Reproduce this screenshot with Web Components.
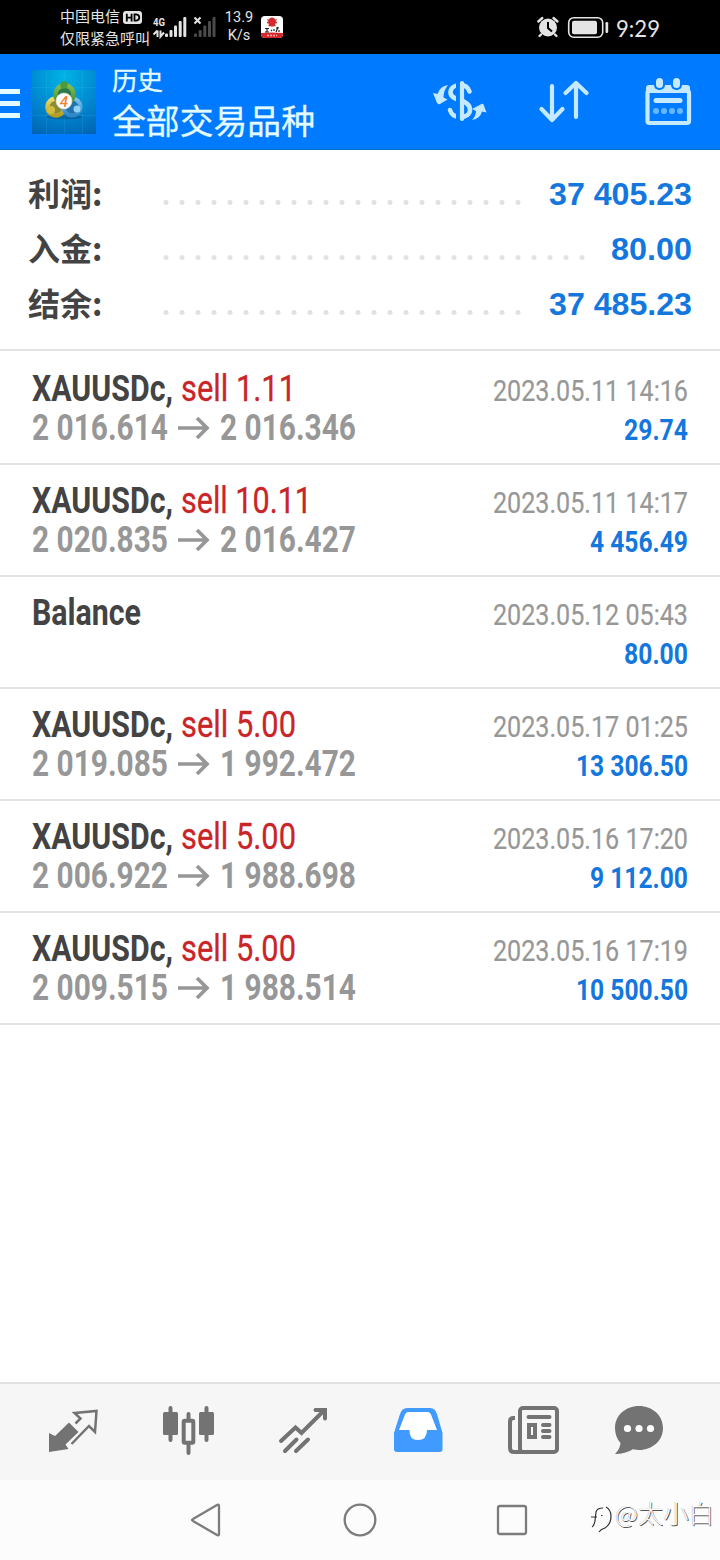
<!DOCTYPE html>
<html lang="zh-CN">
<head>
<meta charset="utf-8">
<title>历史</title>
<style>
html,body{margin:0;padding:0;background:#fff}
body{width:720px;height:1560px;overflow:hidden}
</style>
</head>
<body>
<history-app></history-app>
<script>
const CJK = '"Noto Sans CJK SC", sans-serif';

/* Single line of text whose glyphs are condensed to an exact advance width. */
class FitText extends HTMLElement {
  connectedCallback() {
    if (this.shadowRoot) return;
    const root = this.attachShadow({ mode: 'open' });
    root.innerHTML = `<style>
      :host{display:inline-block;white-space:nowrap;line-height:inherit;vertical-align:top;flex:none}
      span{display:inline-block;transform-origin:0 50%;line-height:inherit}
    </style><span><slot></slot></span>`;
    const w = parseFloat(this.getAttribute('w'));
    const span = root.querySelector('span');
    const natural = span.getBoundingClientRect().width;
    this.style.width = w + 'px';
    span.style.transform = `scaleX(${w / natural})`;
  }
}
customElements.define('fit-text', FitText);

class StatusBar extends HTMLElement {
  constructor() {
    super();
    this.attachShadow({ mode: 'open' }).innerHTML = `<style>
      :host{display:flex;height:54px;background:#000;color:#e4e4e4;font-family:Roboto,${CJK};box-sizing:border-box;padding-left:60px}
      .carrier{width:92px;padding-top:6px;font-size:15px;line-height:22px}
      .carrier div{display:flex;align-items:center;height:22px}
      .hd{margin-left:3px;margin-top:1px}
      .speed{width:32px;margin-left:71px;padding-top:9px;font-size:14.5px;line-height:18px;text-align:center}
      .app{margin:16px 0 0 6px}
      .right{margin-left:auto;display:flex;padding-right:60px}
      .time{font:24px/54px Lato,sans-serif;padding-top:1px;margin-left:7px}
    </style>
    <div class="carrier">
      <div><fit-text w="60">中国电信</fit-text><svg class="hd" width="20" height="14" viewBox="0 0 20 14"><rect width="19" height="13" rx="3" fill="#e4e4e4"/><path d="M3.8 2.8v7.6M8.6 2.8v7.6M3.8 6.6h4.8M11.5 3.4v6.2h1.8q3-.3 3-3.1t-3-3.1z" fill="none" stroke="#000" stroke-width="1.8"/></svg></div>
      <div><fit-text w="90">仅限紧急呼叫</fit-text></div>
    </div>
    <svg width="64" height="54" viewBox="152 0 64 54" style="margin-right:-64px">
      <text x="153" y="26" font-family="Roboto" font-weight="700" font-size="11.500" textLength="12" lengthAdjust="spacingAndGlyphs" fill="#e4e4e4">4G</text>
      <path d="M157.500 30.500v6.500M153.500 34.500l4-4M160.500 30.500v6l3.500-4" fill="none" stroke="#e4e4e4" stroke-width="2"/>
      <g fill="#e4e4e4"><rect x="165" y="33.500" width="3" height="3.500" rx="1"/><rect x="169.500" y="30" width="3" height="7" rx="1"/><rect x="174" y="25.500" width="3" height="11.500" rx="1"/><rect x="178.700" y="21" width="3" height="16" rx="1"/><rect x="183.300" y="17" width="3" height="20" rx="1"/></g>
      <g fill="#4b4b4b"><rect x="194" y="33.500" width="3" height="3.500" rx="1"/><rect x="198.700" y="30" width="3" height="7" rx="1"/><rect x="203.300" y="25.500" width="3" height="11.500" rx="1"/><rect x="208" y="21" width="3" height="16" rx="1"/><rect x="212.500" y="17" width="3" height="20" rx="1"/></g>
      <path d="m194.500 17.500 6 6m0-6-6 6" stroke="#e4e4e4" stroke-width="2"/>
    </svg>
    <div class="speed"><div>13.9</div><div>K/s</div></div>
    <svg class="app" width="22" height="23" viewBox="0 0 22 23"><rect width="22" height="22" rx="4" fill="#fff"/><path d="M0 17q11-1 22 0v1q0 4-4 4H4q-4 0-4-4z" fill="#d52a2b"/><path d="M6.500 3.500l2 1.500m7-1.500-2 1.500M6 6.500h10M7.500 9.500h7" stroke="#d52a2b" stroke-width="1.300"/><ellipse cx="11" cy="6" rx="3.800" ry="4.500" fill="#d52a2b"/><path d="M4 12.500h4m-2 0v3.500m-2 0h4m2-2 1 1m2-2v2m2-3h3m-1-1-2 5m3-2v2" stroke="#222" stroke-width="1.200"/><path d="M6 19.500h10" stroke="#f4aaaa" stroke-width="1.500" stroke-dasharray="2 1"/></svg>
    <div class="right">
      <svg width="74" height="54" viewBox="535 0 74 54"><circle cx="548" cy="27.500" r="9" fill="#e4e4e4"/><path d="m538.300 21.500 4-3.500m15.200 3.500-4-3.500M541 34.500l-1.500 1.500m15.500-1.500 1.500 1.500" stroke="#e4e4e4" stroke-width="2.400" stroke-linecap="round"/><path d="M548 22V28l4 3.500" fill="none" stroke="#000" stroke-width="2"/><rect x="568.700" y="17.700" width="34" height="19.500" rx="5" fill="none" stroke="#e4e4e4" stroke-width="1.600"/><rect x="572" y="20.800" width="25" height="13.500" rx="2" fill="#e4e4e4"/><rect x="605.500" y="22" width="2.700" height="11" rx="1.200" fill="#e4e4e4"/></svg>
      <fit-text class="time" w="44">9:29</fit-text>
    </div>`;
  }
}
customElements.define('status-bar', StatusBar);

class AppToolbar extends HTMLElement {
  constructor() {
    super();
    this.attachShadow({ mode: 'open' }).innerHTML = `<style>
      :host{display:flex;height:96px;box-sizing:border-box;background:#007aff;color:#e3fbff;font-family:${CJK};align-items:flex-start;border-bottom:1px solid #0873c9}
      .menu{width:20px;margin-top:35px;display:grid;gap:7px}
      .menu i{height:5px;background:#e3fbff}
      .logo{margin:16px 0 0 12px}
      .titles{margin-left:16px}
      .a{font-size:25px;line-height:30px;padding-top:10px}
      .b{font-size:33.700px;line-height:42px;padding-top:5px}
      .a,.b{-webkit-text-stroke:.3px #e3fbff}
      .acts{margin-left:auto}
    </style>
    <div class="menu"><i></i><i></i><i></i></div>
    <svg class="logo" width="64" height="64" viewBox="0 0 64 64">
      <defs><radialGradient id="bg" cx=".5" cy=".1" r="1"><stop offset="0" stop-color="#00b4e6"/><stop offset=".55" stop-color="#0088d0"/><stop offset="1" stop-color="#0064b4"/></radialGradient>
      <linearGradient id="gr" x2="0" y2="1"><stop stop-color="#86bd55"/><stop offset="1" stop-color="#3c8a30"/></linearGradient>
      <linearGradient id="ye" x2="0" y2="1"><stop stop-color="#e8dc71"/><stop offset="1" stop-color="#b39d22"/></linearGradient>
      <linearGradient id="bl" x2="0" y2="1"><stop stop-color="#7ec5ee"/><stop offset="1" stop-color="#2f86c8"/></linearGradient></defs>
      <rect width="64" height="64" fill="url(#bg)"/>
      <path d="M0 17.500h64M0 45.500h64M14.500 0v64M50.500 0v64M32.500 0v64" stroke="#4cc8ef" stroke-opacity=".15" fill="none"/>
      <ellipse cx="32" cy="47" rx="18" ry="2.500" fill="#003a63" opacity=".35"/>
      <circle cx="24" cy="37" r="8.500" fill="#8d8a35" stroke="url(#ye)" stroke-width="4.500"/>
      <circle cx="40" cy="37" r="8.500" fill="#2073b0" stroke="url(#bl)" stroke-width="4"/>
      <circle cx="32.500" cy="24.500" r="9" fill="#2c7a4a" stroke="url(#gr)" stroke-width="4.500"/>
      <circle cx="32" cy="15" r="3.800" fill="#4f9a3a"/><circle cx="19" cy="40" r="4" fill="#d0bd3c"/><circle cx="45" cy="39" r="3.500" fill="#8fd0f5"/>
      <circle cx="32" cy="31" r="8" fill="#fff" stroke="#d9d9c8" stroke-width=".6"/><text x="32" y="36.500" text-anchor="middle" font-family="Roboto" font-style="italic" font-weight="500" font-size="15" fill="#ee8136">4</text>
    </svg>
    <div class="titles"><div class="a"><fit-text w="51">历史</fit-text></div><div class="b"><fit-text w="203">全部交易品种</fit-text></div></div>
    <svg class="acts" width="292" height="95" viewBox="428 54 292 95" fill="none" stroke="#c5e9ff">
      <path d="M469.500 91.500c-1.500-4.500-5-6.500-9-6.500-6 0-10 3-10 7.500 0 9 19.500 6 19.500 17 0 4.500-4 7.500-9.500 7.500-6 0-9.500-3-10.500-7" stroke-width="4.600" stroke-linecap="round"/>
      <path d="M458 82v38" stroke="#007aff" stroke-width="4"/><path d="M462 83v36" stroke-width="4.200" stroke-linecap="round"/>
      <path d="M448 85q-8 1-10.500 9l-4.500-1 4 10q1 1.500 3 1l7.500-4.500-4-2q0-7 4.500-12.500zM472 120q8-1 10-8.500l4.500 1-3-8q-.5-1-2-.5l-9.500 5 4 2q0 5-4 9z" fill="#c5e9ff" stroke="none"/>
      <path d="M552 86v34m-10.500-11 10.500 11 10.500-11M576 117V83m-10.500 10 10.500-10 10.500 10" stroke-width="4.200" stroke-linecap="round" stroke-linejoin="round"/>
      <rect x="647.500" y="91" width="41.500" height="32" rx="2" stroke-width="4.200"/><path d="M646 92h44v-4q0-3-3-3H649q-3 0-3 3z" fill="#c5e9ff" stroke="none"/>
      <rect x="654" y="76" width="11" height="14" rx="5" fill="#007aff" stroke="none"/><rect x="671" y="76" width="11" height="14" rx="5" fill="#007aff" stroke="none"/><rect x="656" y="78" width="7" height="10" rx="3.500" fill="#c5e9ff" stroke="none"/><rect x="673" y="78" width="7" height="10" rx="3.500" fill="#c5e9ff" stroke="none"/>
      <path d="M656 100.500h24" stroke-width="5" stroke-linecap="round"/><path d="M656 111h25" stroke="#67b8ff" stroke-width="6" stroke-linecap="round" stroke-dasharray="0 8"/>
    </svg>`;
  }
}
customElements.define('app-toolbar', AppToolbar);

class SummaryRow extends HTMLElement {
  constructor() {
    super();
    this.attachShadow({ mode: 'open' }).innerHTML = `<style>
      :host{display:flex;height:55px;line-height:55px;padding:0 28px 0 28px;font-weight:700}
      .l{width:133px;margin-top:-2px;color:#434343;font-size:32px;font-family:${CJK}}
      .d{flex:1;height:5px;margin-top:33px;background:radial-gradient(circle at 5px 2.500px,#e2e2e2 0 2px,transparent 3px) 0 0/16px 5px repeat-x;}
      .v{color:#1477de;font-family:"Liberation Sans",sans-serif;font-size:32px;margin-left:21px}
    </style><div class="l"><slot name="label"></slot></div><div class="d"></div><div class="v"><slot></slot></div>`;
  }
}
customElements.define('summary-row', SummaryRow);

class DealRow extends HTMLElement {
  connectedCallback() {
    if (this.shadowRoot) return;
    const g = n => this.getAttribute(n) || '';
    const arrow = '<svg width="34" height="38" viewBox="0 0 34 38"><path d="M1 20h30M20 10l10 10-10 10" fill="none" stroke="#979797" stroke-width="3.700"/></svg>';
    this.attachShadow({ mode: 'open' }).innerHTML = `<style>
      :host{display:flex;justify-content:space-between;height:112px;box-sizing:border-box;border-bottom:2px solid #e3e3e3;padding:16px 32px 0;font-family:Roboto,sans-serif;white-space:nowrap}
      .t{height:39px;line-height:40px;font-size:37px;display:flex;color:#434343;font-weight:700}
      .side{color:#c92427;font-weight:400;margin-left:8px;-webkit-text-stroke:.3px #c92427}
      .p{display:flex;color:#979797;font-size:37px;font-weight:700;height:40px;line-height:40px}
      .p svg{margin:0 9px;flex:none}
      .r{display:flex;flex-direction:column;align-items:flex-end}
      .date{height:39px;line-height:44px;font-size:30px;color:#979797;-webkit-text-stroke:.2px #979797}
      .amt{height:40px;line-height:44px;font-size:30px;font-weight:700;color:#1477de}
    </style>
    <div><div class="t">${g('side') ? `<fit-text w="141">XAUUSDc,</fit-text><fit-text class="side" w="${g('sw')}">${g('side')}</fit-text>` : '<fit-text w="109">Balance</fit-text>'}</div>
    ${g('from') ? `<div class="p"><fit-text w="136">${g('from')}</fit-text>${arrow}<fit-text w="136">${g('to')}</fit-text></div>` : ''}</div>
    <div class="r"><fit-text class="date" w="195">${g('date')}</fit-text><fit-text class="amt" w="${g('aw')}">${g('amount')}</fit-text></div>`;
  }
}
customElements.define('deal-row', DealRow);

class TabBar extends HTMLElement {
  constructor() {
    super();
    this.attachShadow({ mode: 'open' }).innerHTML = `<style>
      :host{display:block;height:98px;box-sizing:border-box;border-top:2px solid #e1e1e1;background:#f6f6f6}
      svg{display:block}
    </style>
    <svg width="720" height="96" viewBox="0 1384 720 96" fill="none" stroke="#737373">
      <path d="m69 1422.500 9.500 9.500-13 12.500 3 4.500-19.500 3V1433l6 3z" fill="#737373" stroke="none"/>
      <path d="M75.500 1423.500l5-5-6-5.500 22-2-1.500 21-6-6-17.500 18" stroke-width="2.500"/>
      <path d="M170.500 1408v32M206.500 1408v32M188.500 1414v39" stroke-width="4" stroke-linecap="round"/>
      <g fill="#737373" stroke="none"><rect x="163" y="1412" width="15" height="23" rx="1.500"/><rect x="199" y="1412" width="15" height="23" rx="1.500"/></g><rect x="183.700" y="1420.700" width="9.600" height="22" rx="1" fill="#f6f6f6" stroke-width="4"/>
      <path d="m281 1441 14.500-13.500 6 5.500 23-23M315.500 1410h9.500v8.500M285 1451l11.500-11.500m-.5 11.500 12-11.500" stroke-width="4" stroke-linecap="round"/>
      <path d="M394 1449v-16l6-19q2-6 7-6h23q5 0 7 6l5.500 19v16q0 3-3 3H397q-3 0-3-3z" fill="#409aff" stroke="none"/><path d="m399 1430 6-15.500q1-2.500 3-2.500h20q2 0 3 2.500l6 15.500h-10q0 10-9 10t-8.500-10z" fill="#fff" stroke="none"/>
      <rect x="520" y="1408" width="37" height="44" rx="3" stroke-width="4"/><path d="M515 1418h-1.500q-3.500 0-3.500 3.500V1448q0 4 4 4h10" stroke-width="4"/><path d="M528.500 1417h21M543 1425h6.500m-6.500 6h6.500m-6.500 6h6.500" stroke-width="4" stroke-linecap="round"/><rect x="529" y="1425" width="6" height="12" stroke-width="4"/>
      <path d="M639 1406c13.500 0 24 9.500 24 22s-10.500 22-24 22q-3 0-6-.7-7.500 4.700-18 4.700 5-5 5.500-11-5.500-6-5.500-15c0-12.500 10.500-22 24-22z" fill="#737373" stroke="none"/><g fill="#fff" stroke="none"><circle cx="627.500" cy="1428.500" r="3.600"/><circle cx="639" cy="1428.500" r="3.600"/><circle cx="650.500" cy="1428.500" r="3.600"/></g>
    </svg>`;
  }
}
customElements.define('tab-bar', TabBar);

class SystemNav extends HTMLElement {
  constructor() {
    super();
    this.attachShadow({ mode: 'open' }).innerHTML = `<style>
      :host{display:flex;height:80px;background:#fcfcfc;font-family:${CJK}}
      .mark{display:flex;height:34px;margin-top:16px;font-size:24.500px;line-height:34px;font-weight:300;color:#fcfcfc;text-shadow:.8px .8px 0 #555,-.5px -.5px 0 #bbb}
    </style>
    <svg width="585" height="80" viewBox="0 1480 585 80" fill="none" stroke="#7c7c7c" stroke-width="2.300"><path d="m193 1519 24-14q2-1 2 1v28q0 2-2 1l-24-14q-2-1 0-2z"/><circle cx="360" cy="1520" r="15.300"/><rect x="498" y="1506" width="28" height="28" rx="2"/></svg>
    <svg width="30" height="80" viewBox="585 1480 30 80" fill="none" stroke="#333" stroke-width="1.200"><path d="M603 1508q-6 0-7 4l-1 9q-1 5-3 6M591 1517h6" /><path d="M606 1507q5 3 5 9 0 8-6 12-4 1-6 4M601 1515.500h1.500" /></svg>
    <div class="mark"><fit-text w="99">@太小白</fit-text></div>`;
  }
}
customElements.define('system-nav', SystemNav);

class HistoryApp extends HTMLElement {
  constructor() {
    super();
    this.attachShadow({ mode: 'open' }).innerHTML = `<style>
      :host{display:flex;flex-direction:column;width:720px;height:1560px;background:#fff}
      .sum{height:201px;box-sizing:border-box;padding-top:17px;border-bottom:2px solid #e3e3e3}
      .list{flex:1;padding-top:2px}
    </style>
    <status-bar></status-bar>
    <app-toolbar></app-toolbar>
    <div class="sum">
      <summary-row><span slot="label">利润:</span><fit-text w="143">37 405.23</fit-text></summary-row>
      <summary-row><span slot="label">入金:</span><fit-text w="81">80.00</fit-text></summary-row>
      <summary-row><span slot="label">结余:</span><fit-text w="143">37 485.23</fit-text></summary-row>
    </div>
    <div class="list">
      <deal-row side="sell 1.11" sw="115" from="2 016.614" to="2 016.346" date="2023.05.11 14:16" amount="29.74" aw="64"></deal-row>
      <deal-row side="sell 10.11" sw="131" from="2 020.835" to="2 016.427" date="2023.05.11 14:17" amount="4 456.49" aw="98"></deal-row>
      <deal-row date="2023.05.12 05:43" amount="80.00" aw="64"></deal-row>
      <deal-row side="sell 5.00" sw="115" from="2 019.085" to="1 992.472" date="2023.05.17 01:25" amount="13 306.50" aw="112"></deal-row>
      <deal-row side="sell 5.00" sw="115" from="2 006.922" to="1 988.698" date="2023.05.16 17:20" amount="9 112.00" aw="98"></deal-row>
      <deal-row side="sell 5.00" sw="115" from="2 009.515" to="1 988.514" date="2023.05.16 17:19" amount="10 500.50" aw="112"></deal-row>
    </div>
    <tab-bar></tab-bar>
    <system-nav></system-nav>`;
  }
}
customElements.define('history-app', HistoryApp);
</script>
</body>
</html>
